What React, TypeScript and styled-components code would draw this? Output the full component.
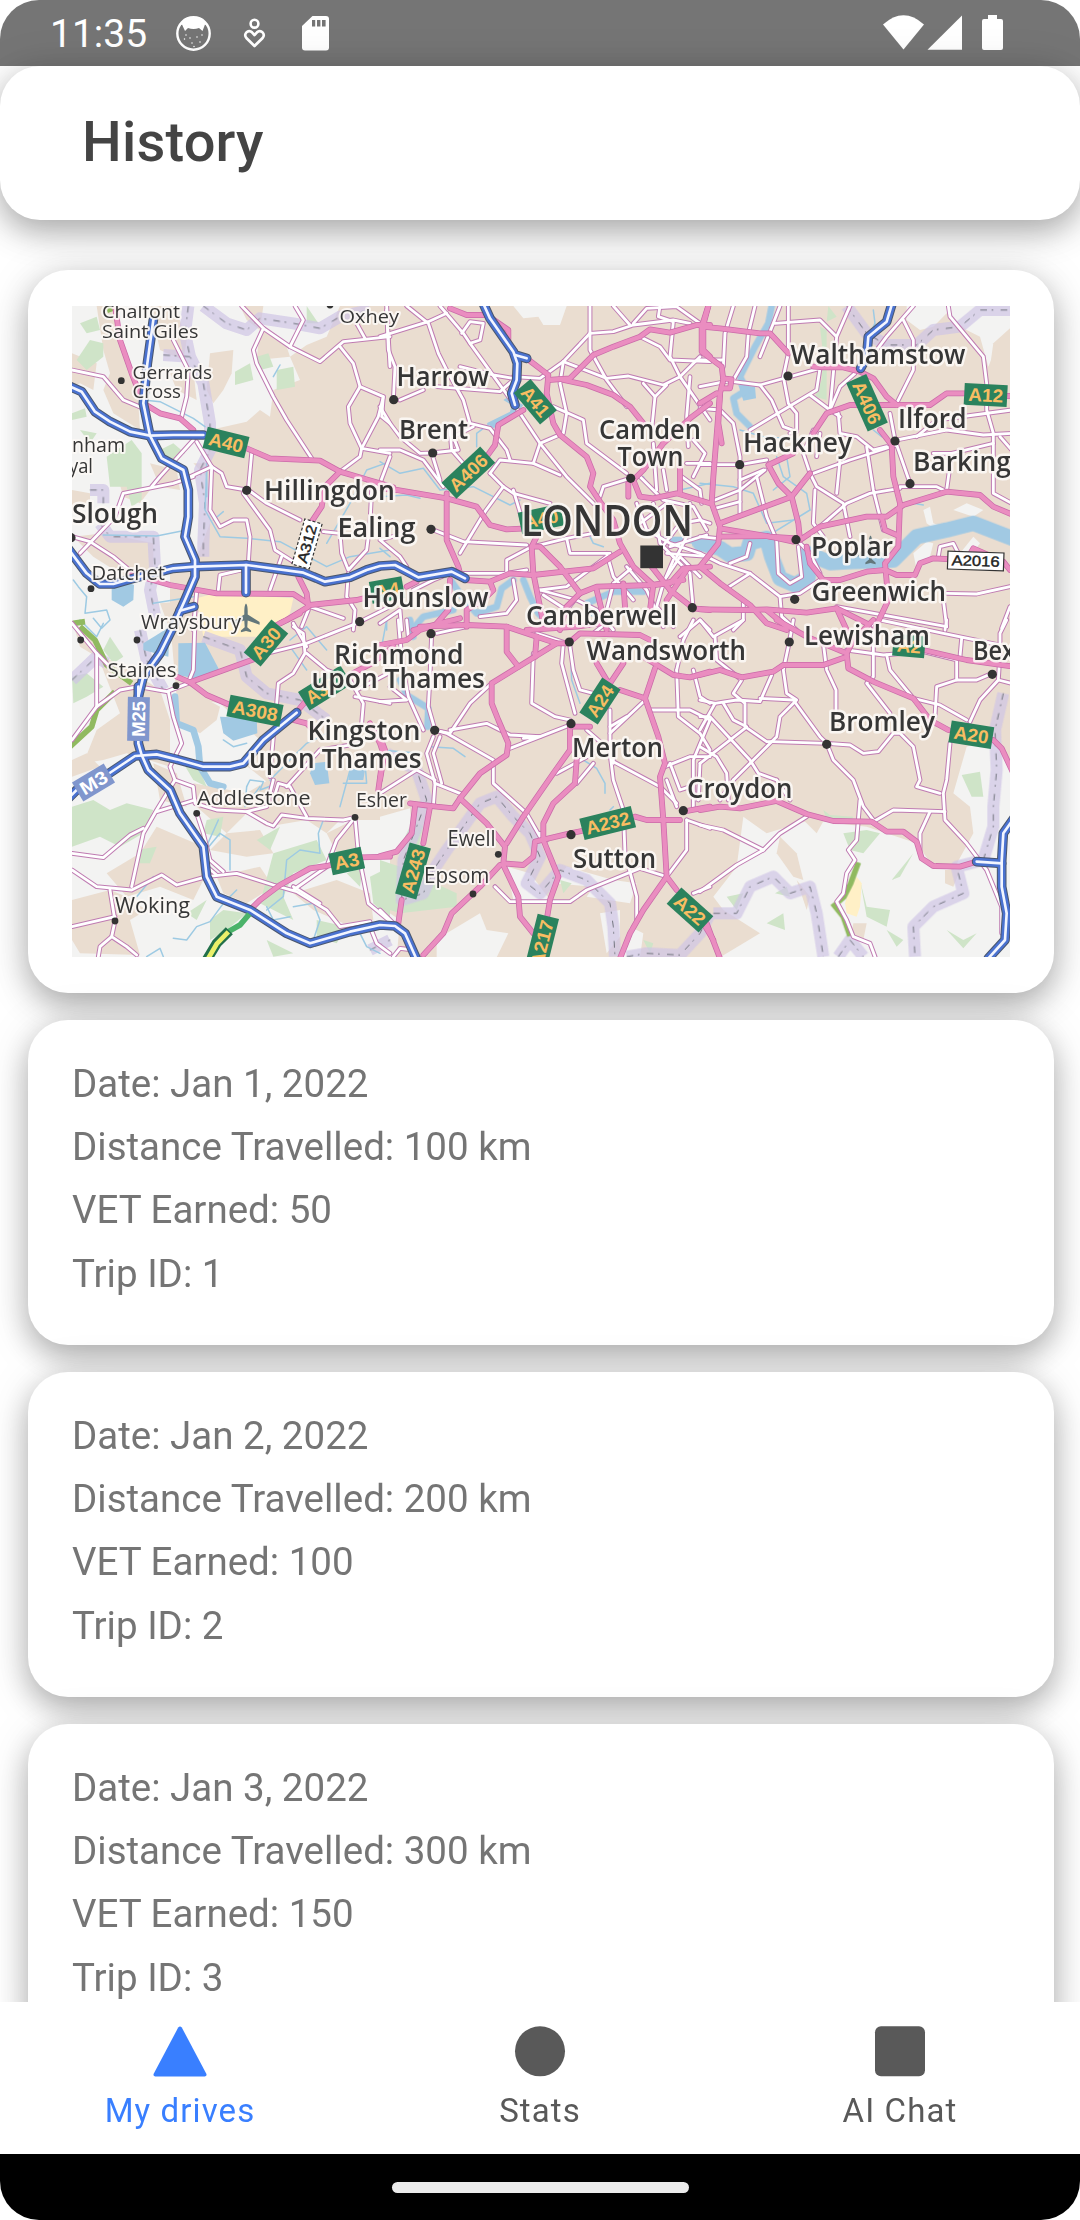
import React from "react";
import styled, { createGlobalStyle } from "styled-components";

const GlobalStyle = createGlobalStyle`
  html, body { margin: 0; padding: 0; background: #fff; }
  * { box-sizing: border-box; }
`;

const Screen = styled.div`
  width: 1080px;
  height: 2220px;
  display: flex;
  flex-direction: column;
  overflow: hidden;
  border-radius: 39px;
  background: #fff;
  font-family: Roboto, "Noto Sans", sans-serif;
`;

const StatusBar = styled.div`
  height: 66px;
  flex: none;
  display: flex;
  justify-content: space-between;
  background: #757575;
  color: #fff;
  padding: 0 76px 0 50px;
`;

const StatusGroup = styled.div<{ $gap?: number }>`
  display: flex;
  align-items: center;
  gap: ${(p) => p.$gap ?? 0}px;
`;

const Clock = styled.span`
  font-size: 39px;
  line-height: 68px;
  width: 125px;
  white-space: nowrap;
  padding-top: 2px;
`;

const Header = styled.header`
  height: 154px;
  flex: none;
  position: relative;
  z-index: 1;
  display: flex;
  align-items: center;
  padding: 0 82px 2px;
  background: #fff;
  border-radius: 40px;
  box-shadow: 0 12px 30px rgba(0, 0, 0, 0.26), 0 6px 48px rgba(0, 0, 0, 0.13);
`;

const Title = styled.h1`
  margin: 0;
  font-size: 56px;
  line-height: 66px;
  font-weight: 500;
  letter-spacing: 0.2px;
  color: #444;
`;

const Feed = styled.main`
  flex: 1;
  min-height: 0;
  overflow: hidden;
  display: flex;
  flex-direction: column;
  gap: 27px;
  padding: 50px 26px 0 28px;
`;

const Card = styled.section`
  flex: none;
  background: #fff;
  border-radius: 40px;
  box-shadow: 0 12px 30px rgba(0, 0, 0, 0.26), 0 6px 48px rgba(0, 0, 0, 0.13);
`;

const MapCard = styled(Card)`
  height: 723px;
  padding: 36px 44px;
`;

const TripCard = styled(Card)`
  height: 325px;
  padding: 32px 44px;
`;

const TripLine = styled.p`
  margin: 0;
  font-size: 38.5px;
  line-height: 63.2px;
  color: #757575;
`;

const TabBar = styled.nav`
  height: 152px;
  flex: none;
  position: relative;
  z-index: 1;
  display: grid;
  grid-template-columns: repeat(3, 1fr);
  background: #fff;
`;

const Tab = styled.div<{ $active?: boolean }>`
  display: flex;
  flex-direction: column;
  align-items: center;
  padding-top: 22px;
  gap: 9px;
  font-size: 33px;
  line-height: 44px;
  letter-spacing: 1.1px;
  color: ${(p) => (p.$active ? "#397fff" : "#595959")};
`;

const GestureBar = styled.footer`
  height: 66px;
  flex: none;
  display: flex;
  justify-content: center;
  align-items: center;
  background: #000;
`;

const Pill = styled.div`
  width: 297px;
  height: 11px;
  border-radius: 6px;
  background: #ebebeb;
`;

const MapSvg = styled.svg`
  display: block;
  width: 938px;
  height: 651px;
`;

/* ------------------------------------------------------------------ map */

type Layer =
  | "land" | "urban" | "wood" | "sand" | "water" | "river" | "creek" | "border"
  | "olive" | "minor" | "primary" | "motorway";
type Sheet = { x: number; y: number } & Partial<Record<Layer, string[]>>;

/* Six survey sheets, each drawn at three units to the pixel. */
const sheets: Sheet[] = [
  {
    x: 60, y: 290,
    land: [
      "36,48 840,48 800,140 740,165 690,200 720,270 640,300 630,380 600,360 560,395 450,420 440,520 400,520 440,560 450,700 400,830 330,850 330,1020 36,1020",
    ],
    urban: [
      "110,48 175,48 180,150 230,260 240,420 160,370 130,300 150,250 130,180",
      "270,48 345,48 380,150 370,210 300,180",
      "450,190 520,180 515,250 490,300 460,340 440,300",
      "36,190 110,220 100,300 60,280 36,290",
      "540,48 610,48 600,120 560,90",
      "600,115 680,170 690,200 590,210",
      "40,740 130,730 280,760 280,860 210,870 100,800",
      "270,520 350,540 360,600 300,590",
      "180,585 270,600 240,640 190,620",
      "330,250 400,240 410,330 350,300",
      "300,940 410,930 400,1020 330,1020",
      "36,600 90,610 90,640 36,650",
    ],
    wood: [
      "60,100 110,80 120,120 80,130", "90,150 130,160 130,200 80,240 50,210",
      "140,500 215,450 245,490 245,630 215,650 200,590 150,590",
      "590,200 625,190 640,230 600,240", "650,240 700,230 705,290 650,300",
      "525,245 570,220 580,270 525,285", "740,48 775,100 740,100",
      "36,370 75,355 80,380 36,390", "300,480 340,460 375,490 320,515", "60,420 110,430 90,460",
    ],
    sand: ["410,925 470,908 700,925 690,970 650,1010 620,1040 430,1040"],
    water: [
      "155,895 180,890 200,875 222,885 220,930 190,950 155,930",
    ],
    river: [],
    creek: [
      "40,870 55,890 80,920 75,970 140,960 150,990 125,1015 100,985",
      "250,330 300,335 400,385 435,410", "440,540 435,660 480,740 560,745 660,755 800,830 870,800 990,780",
      "640,260 660,225", "800,760 870,640 920,540 990,515", "130,735 290,738 380,720", "460,690 490,665",
      "280,940 400,920", "440,520 440,620",
    ],
    border: [
      "430,48 500,100 560,120 600,85 700,100 780,115 840,80 930,60",
      "385,48 375,130 390,200 430,280 450,400 450,480 420,540 435,640 430,760 430,800",
      "310,195 390,200", "120,700 150,740 280,740 285,830 270,900 290,1000", "90,600 130,600 130,640",
    ],
    olive: ["145,48 152,66", "40,1000 75,995"],
    minor: [
      "36,240 130,260 190,330 250,355", "340,150 360,190 385,240 380,320 365,380",
      "545,48 610,115 580,180 590,220 640,320 680,390 755,505",
      "610,115 690,170 780,215 850,155 990,140", "705,48 730,90 690,170", "890,100 915,145",
      "840,170 880,220 900,290 865,350 870,400 905,475 990,490",
      "900,290 970,320 955,380 905,475 900,500 840,545", "980,60 990,230", "970,320 965,380 990,400",
      "400,450 300,560 275,590", "410,455 455,530 485,550 500,590 560,600", "390,560 455,530",
      "400,560 340,580 190,610 165,680 60,790",
      "455,530 450,660 480,710 520,690 560,690 570,740 565,820",
      "575,490 565,600 620,640 720,690", "550,610 630,720 645,780 700,815", "665,800 630,900",
      "545,840 480,855 475,900", "36,740 90,755 160,800 220,850",
      "990,500 960,580 935,600 930,700 920,780 865,840 845,790 840,730 790,725",
      "865,850 860,920 885,960 880,1020", "750,950 850,985", "990,950 890,1000", "725,1010 745,960",
      "410,905 400,1020",
    ],
    primary: [
      "165,48 180,150 215,250 250,340 300,370 360,385 400,420",
      "560,475 630,505 780,512 840,545 960,580 1000,592",
      "840,545 795,590 785,650 755,695", "715,860 740,910 745,950 680,990 620,1020",
      "210,850 330,885 470,910 700,912 750,945 890,930 930,920",
    ],
    motorway: [
      "20,285 65,305 105,365 150,395 210,425 270,437 340,435 430,435",
      "280,90 262,220 250,340 270,437 305,505 370,540 385,600 385,680 375,740 405,810 405,860 375,930 350,985 335,1020 300,1090 250,1160 235,1220",
      "20,770 80,850 120,882 160,882 220,865 340,835 405,830 560,825 730,848 795,875 870,862 920,840 960,828 1005,825 1075,862 1175,845 1215,865",
      "558,825 558,908", "360,962 402,950",
    ],
  },
  {
    x: 380, y: 290,
    land: ["400,48 560,48 540,105 490,105 475,80 430,85"],
    water: ["320,400 390,365 395,345 370,330 385,320 430,345 400,385 340,415"],
    river: [
      "215,875 250,925 290,970 350,950 365,895 400,870", "430,870 450,920 475,970 520,1010",
      "850,750 920,750 1000,755", "640,970 620,940 700,905 790,905", "95,1020 130,980 220,960",
    ],
    creek: [
      "0,515 60,550 130,535 180,600 280,590 390,645 420,630", "290,470 290,430 330,400",
      "0,620 80,615 120,625", "0,775 30,800", "630,740 640,760 670,770", "900,600 990,580", "20,1020 20,980 60,970",
      "790,560 800,580",
    ],
    minor: [
      "80,48 145,100 175,190 200,240 250,330 270,400 330,415 380,480 390,510",
      "180,48 250,130 270,160 400,340 480,460 560,560 640,640",
      "0,140 145,95 200,70", "20,48 25,180 45,230 40,330", "270,160 300,150 310,100 270,95 245,130",
      "240,230 340,255 400,265", "170,290 360,305 400,270", "0,350 30,400 60,440 120,490 155,489 235,480 220,440 280,410",
      "60,330 130,300", "155,489 180,570", "0,480 60,480 130,510 190,590", "210,420 215,480 250,520",
      "630,48 630,180 680,270 740,350", "630,130 550,215 540,280 560,370 550,430 480,460 460,520 360,510 330,550",
      "630,130 700,125 760,105 880,90 930,100", "750,105 700,48", "840,48 835,80 880,95 870,200 900,260 990,390",
      "780,140 840,170 870,210 990,215", "760,100 800,55 890,50 960,100",
      "550,215 680,265 745,258 850,285 900,260 960,200", "520,350 610,390 620,460 740,550",
      "790,280 825,320 815,420", "860,285 825,320", "930,260 920,380 925,470", "400,260 480,265 550,215",
      "370,590 315,665 240,790", "370,590 400,610 510,640", "460,520 540,555", "330,550 370,590",
      "90,725 0,750 60,800 80,830", "155,718 250,755 440,765", "660,620 670,590 750,565",
      "455,770 380,810 380,850", "250,850 380,850 440,840", "460,770 560,745 570,790 690,790", "560,745 640,730",
      "820,640 840,760 880,800", "780,700 860,640 900,700 840,780", "860,600 850,540", "930,640 920,740 890,800",
      "900,700 960,690 990,700", "820,460 830,600", "905,560 960,600 965,640", "990,520 920,520",
      "780,560 850,630 940,650 980,720", "770,640 800,720 870,760 960,790", "940,560 975,490 940,450",
      "480,900 590,930 650,960 700,1020", "480,900 560,890 680,800", "760,830 700,880 680,960", "880,800 930,850 940,960",
      "880,810 850,880 830,950 880,1010", "400,870 410,930 380,970 300,980", "0,1000 60,960 65,1020",
      "490,915 560,960 600,910", "740,830 800,900 850,1010", "680,790 700,860 760,930", "860,790 990,800", "870,770 980,735",
      "860,860 900,800 960,860", "400,600 430,700", "100,900 160,870 210,850",
    ],
    primary: [
      "210,55 260,75 320,75 385,120 385,160",
      "440,205 505,255 500,310 520,400 540,435 620,500 640,550 630,590 660,635 700,690 720,760 760,830 820,885",
      "505,270 570,265 640,195 700,170 780,140 810,118 870,128 950,105 990,105",
      "985,48 970,105 970,180 990,200", "550,270 620,285 700,315 750,350 790,400",
      "430,360 355,405 345,465 320,500", "200,610 200,750 235,830 240,850",
      "990,340 930,385 850,460 790,540 760,570 780,620 820,625 890,610 990,640",
      "900,530 900,610", "745,580 745,620", "0,595 50,600 200,625 290,650 330,705 380,718 440,715",
      "470,740 455,770 460,850 490,1000", "455,770 480,770 540,830 600,910 650,890 820,885 910,870",
      "255,870 330,875 390,850 460,855 640,835 720,785", "80,890 110,875", "210,870 205,960 170,1000",
      "330,875 340,900 310,930 260,960 260,1010", "100,1020 240,985",
      "820,885 870,880 910,835 990,830", "820,885 810,960", "870,900 940,955 990,960", "860,930 920,840",
      "600,910 560,950 540,1020", "730,880 735,950", "650,900 680,1020", "440,1020 590,1010 660,1000", "815,830 870,900",
    ],
    motorway: [
      "305,30 330,85 400,185 412,220 410,270 395,310 405,345", "405,195 440,205",
    ],
  },
  {
    x: 700, y: 290,
    land: [
      "620,48 935,48 935,120 890,170 865,230 840,140 800,120 740,70 700,110 660,120 620,90",
      "680,700 670,660 690,650 700,700 740,715 720,730", "760,660 800,640 850,660 820,680",
      "640,790 680,755 700,760 690,800 650,840", "780,790 820,740 840,760 810,800",
    ],
    urban: ["880,160 935,110 935,230 870,230"],
    wood: ["360,110 380,120 380,330 345,320 365,270 370,200", "385,48 410,80 380,95"],
    water: ["115,285 165,290 168,325 130,332"],
    river: [
      "215,48 205,100 165,170 120,260 140,300 100,325 110,370 150,410",
    ],
    creek: [
      "230,500 250,560 320,610 330,660", "0,580 100,590 160,610 200,700 280,690", "260,500 270,560 220,600",
      "520,420 545,440", "520,60 525,100 505,140", "640,640 670,645", "200,740 330,660", "120,420 190,440 330,450",
    ],
    border: [
      "440,48 500,130 560,165 650,165 700,120 780,110 840,60 940,60",
    ],
    minor: [
      "100,48 75,130 70,230", "165,48 145,130 140,200 100,270 0,290", "240,48 220,100 180,200",
      "265,48 265,190 250,260 265,340 290,370 290,420 270,430", "225,100 360,90 410,140 390,360",
      "450,48 410,140", "100,275 180,285 360,235 350,300 150,420", "180,285 215,330 250,410 290,425",
      "330,315 390,360 420,380", "465,250 420,290 390,360", "610,90 640,150 640,240 590,340",
      "640,48 560,140 530,180", "745,48 750,80 850,200 860,280 860,360 880,430 880,610 935,640",
      "570,370 585,450 630,580", "590,450 740,420 850,435 935,430", "650,440 710,390 935,360", "935,480 900,440",
      "415,370 420,430 470,440 520,480 560,470", "340,550 450,510 590,465", "420,510 410,610",
      "500,470 520,600 550,720", "330,550 350,590 430,640 450,740", "345,600 340,700 370,740",
      "360,710 440,640 510,610 600,595", "600,590 710,590 730,600", "700,490 755,490 740,600", "755,490 880,460",
      "0,355 60,360 100,400 120,500 120,670", "0,524 120,524 200,510", "45,630 120,600 195,540",
      "45,655 120,635", "120,570 190,540", "170,560 200,680 230,750 235,850 270,880 305,860 295,770", "0,210 70,210",
      "340,420 310,490 330,550", "360,430 350,500", "0,790 60,820 150,850 240,920 300,910 360,870",
      "150,850 80,895", "150,760 140,800 90,820", "240,920 245,980 290,1020", "130,940 130,990 100,1020",
      "410,950 740,1010", "730,930 740,1010", "740,910 830,912 930,890", "715,800 720,770 760,760 775,790",
      "930,950 905,1015", "0,740 50,745", "300,760 330,790 360,850",
    ],
    primary: [
      "25,48 5,110 60,115 180,130 210,130 265,190", "5,110 5,185 65,230 70,270 60,310 55,400 65,460",
      "70,265 95,268 90,295 66,295", "60,310 40,560 35,640 60,710 55,760 0,830", "0,340 50,310",
      "340,230 370,232 430,232 480,245 520,265 560,320 590,345 690,345 740,310 800,310", "920,318 940,318",
      "590,345 450,345 380,370 340,430", "540,420 575,465 580,560 600,640 595,770 555,820 565,930 525,1015",
      "330,550 275,620 235,580 205,525 280,490 300,460", "275,620 60,700 60,715 210,740 290,745",
      "275,620 295,700 300,750 360,710 500,680 560,680 610,645 740,605 840,615 880,650 940,675",
      "545,680 555,720 590,735", "60,740 200,738 280,755",
      "320,770 330,820 370,870 420,870 500,845 555,840 590,855 645,855 660,820 700,805 800,810 820,775 910,815 930,840",
      "0,830 60,880 150,945 200,1000 260,1020", "0,958 150,960 200,958 320,968 410,955 500,1000", "410,955 440,1020",
      "200,960 260,1010",
    ],
    motorway: ["578,35 560,95 505,140 500,200 482,235"],
  },
  {
    x: 60, y: 620,
    land: [
      "36,0 330,0 350,230 480,250 600,360 550,430 640,500 620,590 850,600 990,600 990,1012 36,1012",
    ],
    urban: [
      "110,100 210,150 300,210 330,300 330,440 200,400 130,420 70,430 110,330 180,280",
      "36,0 100,60 110,110 60,80", "350,230 390,210 480,260 470,300 420,340 350,300",
      "400,490 560,520 640,470 780,480 850,590 800,640 740,600 620,620 560,580 500,640 410,560",
      "240,700 290,620 430,680 440,760 400,840 300,800 200,830 140,760",
      "36,840 150,810 200,830 260,870 210,900 240,1005 60,1000 36,960",
      "470,770 600,740 640,800 560,850 490,820", "700,820 830,780 930,820 940,900 850,910 760,870",
      "800,640 880,600 890,700 830,700", "280,430 350,460 380,560 300,540", "36,420 80,400 120,440 36,470",
      "500,640 600,630 640,700 560,710 450,690",
    ],
    wood: [
      "36,560 100,540 150,570 200,550 280,570 250,640 180,680 120,650 36,680",
      "36,170 80,160 130,200 80,230 40,250", "490,870 560,880 500,930 450,960 450,900",
      "640,700 770,660 800,720 700,760 670,830 700,900 640,870 600,850",
      "930,770 990,740 990,900 940,850", "370,430 420,450 440,500 400,480", "590,660 660,620 630,690",
      "440,600 490,590 480,650 430,640", "230,690 290,680 270,730 230,730", "380,880 440,840 410,900",
      "770,900 860,920 830,970 770,950", "620,960 700,1000 640,1010", "150,50 190,110 160,130 130,90", "860,760 910,740 900,800",
    ],
    water: [
      "355,70 435,68 478,150 400,175 355,165", "480,290 590,295 592,340 520,362 490,340",
      "250,70 330,20 325,110 250,90", "760,430 800,425 808,490 765,495 750,460", "870,445 915,450 910,480 865,480",
    ],
    river: ["345,230 350,310 400,330 415,380 420,440 450,490 490,500"],
    creek: [
      "60,0 110,50 130,10", "560,500 570,480 610,485 600,510 640,495 630,480 740,370 800,340", "490,360 520,380 560,370",
      "560,500 555,560 600,500", "690,60 740,20 800,90", "690,80 740,150", "870,450 840,560", "475,600 430,700 480,640 510,660 510,750",
      "620,870 670,830 680,720 720,690 780,700 775,640 790,600", "530,810 490,850 450,905 410,920 380,960 340,955",
      "280,770 230,830", "700,860 760,850 780,900 760,960", "620,860 640,900 690,890", "900,940 920,980 960,1000",
      "260,1010 300,985 310,1010", "850,490 920,490 915,430",
    ],
    border: [
      "36,180 110,110 140,130", "240,30 260,120 310,210", "430,50 540,90 560,170 620,220 720,240 800,300",
      "930,990 990,960",
    ],
    olive: ["60,20 105,60 140,135 215,190", "165,215 110,270 95,320 30,380"],
    minor: [
      "36,10 110,100 150,140", "110,100 110,260 36,360", "110,260 180,210 235,200 320,215 385,190",
      "405,0 400,150 385,187", "325,215 340,290 365,370 330,440 345,480 290,570 250,640 215,800",
      "345,480 400,500 405,550 470,570 560,575 620,610 640,618 665,585 740,595 850,600 885,592",
      "405,540 290,575", "410,580 430,640 450,720 490,755", "36,700 130,713 210,645 250,625",
      "36,750 110,800 215,810 305,765 350,795 440,770 530,760 640,795 710,815 800,870 840,920 930,905",
      "150,810 165,903 155,950 200,980 230,1005", "165,890 36,920", "155,950 120,980 115,1010",
      "885,592 830,660 800,740 700,810", "885,592 895,700 925,850 985,900", "560,575 620,560 640,480",
      "640,540 655,490 690,500 740,590", "680,500 780,390 900,370", "630,470 640,350",
      "650,250 655,190 700,160 735,100 730,40 700,20", "620,100 740,70 890,10", "740,100 800,150 850,170",
      "870,180 910,250 905,310", "890,210 985,160", "885,230 990,250", "930,920 950,970 990,1000",
      "470,765 440,740", "740,80 700,10", "780,850 700,800",
    ],
    primary: [
      "720,-20 660,10", "590,115 390,187 350,170", "390,187 440,225 510,255", "715,270 740,240",
      "700,300 740,310 760,330", "860,170 935,130 1000,80", "930,310 960,370 970,400 955,510",
      "990,710 900,712 800,738 750,745 660,795 600,840 575,865",
    ],
    motorway: [
      "15,545 60,500 140,465 225,408 290,403 350,418 430,440 510,440 550,430 610,360 710,278",
      "235,200 235,370 245,405 265,450 330,510 360,580 430,680 440,770 470,830 570,870 680,940 750,970 870,935 960,915 1005,918 1035,940 1075,1030",
    ],
  },
  {
    x: 380, y: 620,
    land: [
      "0,590 90,565 95,640 50,700 0,710", "380,740 450,760 510,840 400,840",
      "200,940 300,880 320,930 385,940 350,1012 170,1012 170,970",
      "520,790 560,740 700,780 770,790 750,850 620,830 640,800", "750,920 790,940 780,1012 850,1012 720,1012",
      "0,860 60,900 50,1012 0,1012", "660,880 720,870 720,950 680,1000",
    ],
    wood: [
      "0,720 60,740 100,760 230,820 230,860 60,880 0,860", "540,780 575,790 550,820",
      "790,960 820,970 810,1000", "60,680 100,600 130,620 110,700",
    ],
    river: ["60,180 80,225 145,265 142,320", "90,0 100,50"],
    creek: ["20,0 5,80", "570,60 575,180 600,250", "150,380 220,385 255,410", "610,420 650,445 675,490 675,520", "0,390 120,400", "690,570 700,560"],
    border: [
      "20,400 110,450 140,540 110,620 70,720 65,840 130,820 160,750 200,690 300,550 350,530 400,590 450,640 480,710 440,790 480,820 540,750 620,780 690,850 700,920 705,1010",
      "740,1010 800,1000 900,1005 960,940 990,880",
    ],
    minor: [
      "55,0 60,60 70,150 85,230 130,330", "80,0 85,50",
      "155,40 150,170 145,260 165,330 200,340 340,420 340,490 440,580 480,650",
      "160,350 140,400 165,490 240,520", "165,490 160,560", "180,350 160,400 185,490",
      "165,331 210,340 270,250 335,190", "210,330 320,310 390,345 480,350 570,315", "390,385 480,350 430,355",
      "0,245 80,240 30,200", "170,40 260,20", "460,100 455,250 525,290 570,300", "550,70 545,130 585,280",
      "568,66 580,150 600,210 640,220", "690,270 690,400 700,480 730,570 735,700 770,830 770,900",
      "690,340 790,245", "810,270 930,270 990,300", "700,425 840,500 890,550", "530,460 640,400", "640,430 590,490",
      "890,150 895,290 960,340 990,390", "940,0 910,60 890,150", "940,150 960,230 990,250",
      "990,300 940,420 940,560", "855,440 930,410 990,410", "860,480 890,560", "920,600 920,690 860,770",
      "920,600 990,625", "860,770 780,745 620,810 570,845 390,845 345,800", "0,520 110,450 165,480",
      "940,820 990,800", "620,330 700,400 700,430", "870,430 900,510 930,500", "900,50 960,0 990,30", "690,320 740,290",
      "0,870 40,910", "40,1010 60,985 100,990", "960,430 955,540", "480,640 500,660", "640,40 690,0", "470,40 560,70",
    ],
    primary: [
      "0,75 80,60 120,30 200,5", "120,20 260,15 380,20 470,50 530,70 565,70 600,40 780,45 810,60",
      "380,20 380,95 415,140", "530,70 335,190 335,250 355,300 385,370 380,405 300,460 240,535 220,565 170,560 90,550",
      "150,560 130,670", "105,560 95,640 50,695 0,708", "470,50 465,110",
      "240,535 320,610 375,680 370,730 430,735 460,710 465,665 570,640 620,630",
      "570,320 570,390 520,460 430,590 380,670", "630,320 570,320", "590,420 585,490 520,550 490,610 490,660 535,770 510,840 500,900",
      "765,590 800,600 900,600", "370,735 415,830 420,890 460,940", "360,735 300,800 215,880 190,940 130,1005",
      "65,840 55,910", "650,130 680,180 690,190 730,130",
      "720,210 795,235 835,350 855,430 840,470 850,600 860,770 790,870 750,940 720,1015",
      "795,235 825,145", "790,110 880,165 930,172 990,155", "860,770 890,810", "970,910 1000,960",
      "910,575 990,560", "0,350 15,390 0,480",
    ],
  },
  {
    x: 700, y: 620,
    land: [
      "130,590 200,640 330,600 500,620 650,670 700,740 760,750 820,640 810,560 760,520 800,380 880,350 935,450 935,1012 60,1012 180,940 70,870 40,830 110,740",
    ],
    urban: ["240,650 290,700 310,780 280,770 230,700", "310,600 375,595 350,640", "735,750 780,750 760,800 735,790", "290,780 330,830 320,870", "460,910 500,910 490,960 455,940"],
    wood: [
      "370,570 390,585 460,590 450,605 380,600", "430,640 500,630 540,640 490,700 450,690", "785,465 840,455 850,530 815,530",
      "480,780 500,860 570,870 560,920 500,890", "575,780 640,700 600,770", "200,910 250,880 255,930",
      "740,930 790,960 830,940 790,985", "80,830 130,820 110,870", "560,930 610,960 590,980", "225,820 260,800 270,830",
    ],
    sand: ["470,770 485,790 480,860 470,890 440,880 435,850 450,800"],
    border: [
      "40,880 110,880 150,800 220,770 270,820 330,800 350,880 370,1010",
      "910,220 885,330 890,450 880,560 880,620 850,720 770,740 790,820 700,860 640,920 645,1010",
      "415,1010 450,960 490,1010",
    ],
    olive: ["475,727 452,790 432,830 415,845", "398,850 430,890 450,948"],
    minor: [
      "0,0 40,50 130,0", "45,50 50,120 125,180 100,220 135,250 135,320 200,365 220,365",
      "0,240 45,250 110,240 180,245 215,165", "180,235 280,240 360,350 380,370",
      "280,0 268,66 250,150 260,220 290,240 240,290 230,350 215,365 100,480", "0,430 135,325", "45,250 0,330",
      "0,290 30,290 150,420 175,460 230,480", "0,380 50,410 80,460 85,540", "70,250 100,300 140,320",
      "215,365 380,370 450,375 490,400 535,395 580,340 600,340 640,380 660,480 650,500 720,520",
      "370,70 380,150 408,210 408,280", "380,370 400,420 460,480 490,560 520,600",
      "480,540 470,660 445,690 465,720 440,760 430,820 410,845 440,900 460,950 510,970 525,1010",
      "520,0 520,170 500,190 570,280", "440,90 550,105 670,95 770,120 770,180 710,200 705,290",
      "560,105 570,150 640,235 720,255 800,300", "540,0 730,40 900,75", "735,30 740,0", "785,55 780,110",
      "770,180 830,180 877,160", "900,100 895,180 840,240 810,305", "895,180 935,190", "920,0 900,40 900,80",
      "750,370 740,480 730,520 735,600 800,670 860,750 905,860 905,940", "520,605 580,570 735,575",
      "690,575 660,640 660,700", "0,815 110,735 190,690 240,640 320,590", "0,615 70,630 190,690",
      "230,480 270,540", "100,480 60,540",
    ],
    primary: [
      "0,165 60,150 125,172 220,155 250,135 370,135 440,110", "230,0 320,50 440,100 445,145 520,185 640,235 690,300 745,330",
      "440,100 460,60 520,0", "670,90 800,120 940,140", "880,360 905,385 940,460",
      "0,570 60,560 120,565 230,543 320,582 400,603 515,605 560,635 610,635 650,665 665,715 700,738 780,740 830,725",
      "20,910 35,950 60,1015",
    ],
    motorway: ["945,590 910,640 905,725 905,800 920,880 915,960 865,1015", "830,725 905,730"],
  },
];

type Pass = { layer: Layer; fill?: string; stroke?: string; width?: number; dash?: string; opacity?: number };

/* Painting order from the ground up. */
const passes: Pass[] = [
  { layer: "land", fill: "#f3f3f2" },
  { layer: "urban", fill: "#eaddd0" },
  { layer: "wood", fill: "#cfe4c8" },
  { layer: "sand", fill: "#fff0c6" },
  { layer: "border", stroke: "#cfc4e6", width: 36, opacity: 0.7 },
  { layer: "border", stroke: "#666a72", width: 3, dash: "20 14 5 22", opacity: 0.9 },
  { layer: "creek", stroke: "#9dcae3", width: 4.5 },
  { layer: "water", fill: "#a1c9e3" },
  { layer: "river", stroke: "#a1c9e3", width: 20 },
  { layer: "olive", stroke: "#90ba60", width: 17 },
  { layer: "minor", stroke: "#bf7bb2", width: 14.5 },
  { layer: "minor", stroke: "#ffffff", width: 8.5 },
  { layer: "primary", stroke: "#cb6ba9", width: 17.5 },
  { layer: "primary", stroke: "#ea8dc0", width: 13 },
  { layer: "motorway", stroke: "#4a566c", width: 29 },
  { layer: "motorway", stroke: "#4a72d0", width: 23 },
  { layer: "motorway", stroke: "#f2f5ff", width: 8 },
];

const THAMES = "0,760 60,775 90,795 140,790 150,758 200,745 215,800 240,865 285,885 325,860 322,790 390,818 440,815 580,810 650,740 740,720 820,700 950,750";

type Label = [text: string, x: number, y: number, width: number | null, size: number];

const labels: Label[] = [
  ["Chalfont", 102, 318, 78, 19], ["Saint Giles", 102, 338, 96.5, 19],
  ["Gerrards", 132.5, 378.5, 79.5, 19], ["Cross", 132.5, 397.5, 48.5, 19],
  ["nham", 72, 452, 53, 19.5], ["yal", 69, 473, 24, 19.5], ["Datchet", 91.5, 580, 73.5, 19.5],
  ["Wraysbury", 141, 629, 100, 19.5], ["Oxhey", 339.5, 322.5, 59.5, 19], ["Staines", 107.5, 677, 69, 19.5],
  ["Addlestone", 197, 805, 113.5, 20], ["Esher", 356, 807, 51, 20], ["Ewell", 447.5, 845.7, 48, 21],
  ["Epsom", 424, 883, 65.5, 21], ["Woking", 115, 912.5, 75, 21],
  ["Slough", 72, 523, 86, 26.5], ["Hillingdon", 264, 499.5, 131, 26.5], ["Ealing", 337.5, 536.5, 78, 26.5],
  ["Hounslow", 362.5, 606.5, 126, 26.5], ["Harrow", 396.5, 385.7, 92.5, 26.5], ["Brent", 399, 438.5, 69, 26.5],
  ["Camden", 599, 438.5, 102, 26.5], ["Town", 617.5, 465.7, 66, 26.5], ["Camberwell", 526, 625, 151, 26.5],
  ["Walthamstow", 790.5, 363.5, 175, 26.5], ["Ilford", 898, 427.7, 68.5, 26.5], ["Hackney", 743, 451.5, 109, 26.5],
  ["Barking", 913, 470.7, 98, 26.5], ["Poplar", 811, 555.7, 82, 26.5], ["Greenwich", 811.5, 600.7, 134.5, 26.5],
  ["Lewisham", 804, 645, 126, 26.5], ["Wandsworth", 586.5, 660, 159.5, 26.5], ["Bex", 973, 660, 42, 26.5],
  ["Bromley", 829, 731, 106, 26.5], ["Croydon", 687, 798, 105.5, 26.5], ["Merton", 572, 756.7, 91, 26.5],
  ["Sutton", 573, 867.7, 83, 26.5], ["Richmond", 334, 663.5, 129.5, 26.5], ["upon Thames", 311.5, 688, 173.5, 26.5],
  ["Kingston", 307.5, 740, 113, 26.5], ["upon Thames", 249, 768, 172.5, 26.5],
];

type ShieldKind = "green" | "white" | "blue";
type Shield = [text: string, x: number, y: number, angle: number, width: number, kind?: ShieldKind];

const shields: Shield[] = [
  ["A40", 226, 442.5, 14, 43], ["A41", 535.3, 401.7, 50, 41], ["A406", 468.3, 472.7, -43, 53],
  ["A312", 307, 544, -74, 47, "white"], ["A406", 867, 402.7, 66, 53], ["A12", 985.7, 395, 3, 43],
  ["A2016", 975.7, 561, 2, 56, "white"], ["A30", 266, 643, -50, 43], ["A308", 255, 710.7, 11, 54],
  ["A307", 325, 688, -32, 50], ["A3", 346.7, 861, -12, 33], ["A4", 387, 590, -10, 33], ["A40", 541, 519, -12, 43],
  ["A24", 600, 701, -57, 42], ["A232", 607.7, 823, -14, 53], ["A243", 413, 871, -74, 53],
  ["A217", 541.7, 943, -76, 55], ["A22", 690, 910, 42, 43], ["A20", 971.3, 734.7, 9, 43], ["A2", 909, 646, 5, 32],
  ["M25", 138.5, 719, -89, 44, "blue"], ["M3", 93.5, 782.5, -31, 37, "blue"],
];

const shieldColors: Record<ShieldKind, { bg: string; fg: string }> = {
  green: { bg: "#2b825d", fg: "#f8bd62" },
  white: { bg: "#ffffff", fg: "#222222" },
  blue: { bg: "#8096cd", fg: "#ffffff" },
};

const bigDots = [
  [246.7, 490.3], [359.7, 621.7], [393.7, 399.7], [432.7, 453], [431, 529.3], [630.7, 478.3], [692.3, 607.7],
  [788, 376], [739.7, 464.7], [895, 441], [910, 483.7], [796, 539.7], [794.7, 599.3], [431, 633.7], [434.7, 730.3],
  [569.3, 642], [571, 723.7], [571, 834.7], [683.3, 810.7], [789.3, 642], [826.7, 744.3], [992.3, 674.3], [71, 537.7],
];
const smallDots = [
  [121.3, 380.7], [91, 588.7], [80.7, 640], [137, 640], [176, 685.7], [196.7, 813.3], [355, 817.3], [115, 921],
  [498.3, 854.3], [473, 894], [330, 305],
];

function PlacePlane({ x, y, scale }: { x: number; y: number; scale: number }) {
  return (
    <path
      transform={`translate(${x} ${y}) scale(${scale})`}
      fill="#63777b"
      d="M0,-16 Q2,-14 2,-7 L2,-3 L16,6 L16,9 L2,4 L1.5,12 L6,16 L6,18 L0,16.5 L-6,18 L-6,16 L-1.5,12 L-2,4 L-16,9 L-16,6 L-2,-3 L-2,-7 Q-2,-14 0,-16 Z"
    />
  );
}

function LondonMap() {
  return (
    <MapSvg viewBox="72 306 938 651" role="img" aria-label="London">
      <rect x="72" y="306" width="938" height="651" fill="#eaddd0" />
      {passes.map((pass, i) => (
        <g
          key={i}
          fill={pass.fill ?? "none"}
          stroke={pass.stroke}
          strokeWidth={pass.width}
          strokeDasharray={pass.dash}
          opacity={pass.opacity}
          strokeLinejoin="round"
          strokeLinecap={pass.layer === "border" || pass.layer === "olive" ? "butt" : "round"}
        >
          {sheets.map((sheet) => (
            <g key={`${sheet.x}-${sheet.y}`} transform={`translate(${sheet.x} ${sheet.y}) scale(0.33333)`}>
              {(sheet[pass.layer] ?? []).map((points, n) =>
                pass.fill ? <polygon key={n} points={points} /> : <polyline key={n} points={points} />
              )}
              {pass.layer === "river" && sheet.x === 700 && sheet.y === 290 && (
                <polyline points={THAMES} strokeWidth={46} />
              )}
            </g>
          ))}
        </g>
      ))}
      <g transform="translate(60 620) scale(0.33333)" fill="none">
        <polyline points="568,882 540,915 505,935" stroke="#4bb36a" strokeWidth="17" />
        <polyline points="508,932 470,970 440,1020" stroke="#22704a" strokeWidth="30" />
        <polyline points="505,936 470,972 442,1020" stroke="#eaf06a" strokeWidth="14" />
      </g>
      <PlacePlane x={246} y={617} scale={0.85} />
      <PlacePlane x={870.5} y={549} scale={0.85} />
      {bigDots.map(([x, y]) => <circle key={`${x}-${y}`} cx={x} cy={y} r="4.6" fill="#333" />)}
      {smallDots.map(([x, y]) => <circle key={`${x}-${y}`} cx={x} cy={y} r="3.4" fill="#333" />)}
      {shields.map(([text, x, y, angle, width, kind = "green"]) => (
        <g key={`${text}-${x}`} transform={`translate(${x} ${y}) rotate(${angle})`}>
          <rect
            x={-width / 2} y={kind === "white" ? -9 : -11} width={width} height={kind === "white" ? 18 : 22}
            fill={shieldColors[kind].bg}
            stroke={kind === "white" ? "#333" : "none"} strokeWidth="1.2"
            strokeDasharray={text === "A312" ? "3 2" : undefined}
          />
          <text
            textAnchor="middle" y={kind === "white" ? 5 : 6.6} textLength={width - 8} lengthAdjust="spacingAndGlyphs"
            fontFamily="'Liberation Sans', Arial, sans-serif" fontSize={kind === "white" ? 14.5 : 18.5}
            fontWeight={kind === "white" ? 400 : 700} fill={shieldColors[kind].fg}
            stroke={kind === "white" ? "#222" : "none"} strokeWidth="0.4"
          >
            {text}
          </text>
        </g>
      ))}
      <rect x="640.3" y="545.5" width="22.7" height="22.7" fill="#333" />
      <g
        fontFamily="'Open Sans', 'Noto Sans', sans-serif" fill="#363636" stroke="#fcf8f5" strokeOpacity="0.9"
        strokeLinejoin="round" paintOrder="stroke"
      >
        {labels.map(([text, x, y, width, size]) => (
          <text
            key={`${text}-${x}-${y}`} x={x} y={y} fontSize={size} fontWeight={size > 22 ? 600 : 400}
            strokeWidth={size > 22 ? 5 : 4} textLength={width ?? undefined} lengthAdjust="spacingAndGlyphs"
          >
            {text}
          </text>
        ))}
        <text x="521" y="536" fontSize="44" fontWeight="600" strokeWidth="5" textLength="172" lengthAdjust="spacingAndGlyphs">
          LONDON
        </text>
      </g>
    </MapSvg>
  );
}

/* ---------------------------------------------------------------- icons */

const StatusGlyphs = styled.svg`
  display: block;
  flex: none;
`;

function NotificationIcons() {
  return (
    <StatusGlyphs width="160" height="66" viewBox="175 0 160 66">
      <circle cx="193.5" cy="33.5" r="16.2" fill="none" stroke="#fff" strokeWidth="2.4" />
      <path fill="#fff" d="M179,26 Q183,17 193.5,17 Q204,17 208,26 L205,24.5 L202.5,31 L199,28 Q193.5,30 188,28 L185,31 L182,24.5 Z" />
      <g fill="#fff">
        {[[186, 35], [190, 38], [197, 37], [202, 35], [184.5, 39], [192, 43], [200, 42], [194, 46.5]].map(
          ([x, y]) => <circle key={`${x}-${y}`} cx={x} cy={y} r="0.75" />
        )}
      </g>
      <circle cx="254.5" cy="23.7" r="3.9" fill="none" stroke="#fff" strokeWidth="2.6" />
      <path
        fill="none" stroke="#fff" strokeWidth="2.7" strokeLinejoin="round"
        d="M254.5,46 L246.6,38.2 C242.5,34 248.5,28.8 252,32.3 L254.5,35 L257,32.3 C260.5,28.8 266.5,34 262.4,38.2 Z"
      />
      <path fill="#fff" d="M312.5,16 H326 a3,3 0 0 1 3,3 V47.5 a3,3 0 0 1 -3,3 H305 a3,3 0 0 1 -3,-3 V26 Z" />
      <path fill="#757575" d="M312,20 h3.2 v6.6 h-3.2z M317,20 h3.4 v6.6 h-3.4z M322,20 h3.6 v6.6 h-3.6z" />
    </StatusGlyphs>
  );
}

function SystemIcons() {
  return (
    <StatusGlyphs width="122" height="66" viewBox="882 0 122 66">
      <path fill="#fff" d="M883,24.5 Q903.5,6 924,24.5 L903.5,49.5 Z" />
      <path fill="#fff" d="M962,15.5 V49.8 H927.5 Z" />
      <path fill="#fff" d="M988,15 h9 v4 h4 a2,2 0 0 1 2,2 v27 a2,2 0 0 1 -2,2 h-17 a2,2 0 0 1 -2,-2 v-27 a2,2 0 0 1 2,-2 h4z" />
    </StatusGlyphs>
  );
}

const TabIcon = ({ shape }: { shape: "triangle" | "circle" | "square" }) => (
  <svg width="56" height="56" viewBox="0 0 56 56" fill="currentColor">
    {shape === "triangle" && (
      <path d="M26.2,3.6 Q28,1.2 29.8,3.6 L54.3,49.8 Q55.2,52.2 52.8,52.4 H3.2 Q0.8,52.2 1.7,49.8 Z" />
    )}
    {shape === "circle" && <circle cx="28" cy="27.3" r="25" />}
    {shape === "square" && <rect x="3" y="2.3" width="50" height="50" rx="6" />}
  </svg>
);

const trips = [
  { id: 1, date: "Jan 1, 2022", distance: 100, earned: 50 },
  { id: 2, date: "Jan 2, 2022", distance: 200, earned: 100 },
  { id: 3, date: "Jan 3, 2022", distance: 300, earned: 150 },
];

export default function App() {
  return (
    <>
      <GlobalStyle />
      <Screen>
        <StatusBar>
          <StatusGroup>
            <Clock>11:35</Clock>
            <NotificationIcons />
          </StatusGroup>
          <StatusGroup>
            <SystemIcons />
          </StatusGroup>
        </StatusBar>
        <Header>
          <Title>History</Title>
        </Header>
        <Feed>
          <MapCard>
            <LondonMap />
          </MapCard>
          {trips.map((trip) => (
            <TripCard key={trip.id}>
              <TripLine>{`Date: ${trip.date}`}</TripLine>
              <TripLine>{`Distance Travelled: ${trip.distance} km`}</TripLine>
              <TripLine>{`VET Earned: ${trip.earned}`}</TripLine>
              <TripLine>{`Trip ID: ${trip.id}`}</TripLine>
            </TripCard>
          ))}
        </Feed>
        <TabBar>
          <Tab $active>
            <TabIcon shape="triangle" />
            My drives
          </Tab>
          <Tab>
            <TabIcon shape="circle" />
            Stats
          </Tab>
          <Tab>
            <TabIcon shape="square" />
            AI Chat
          </Tab>
        </TabBar>
        <GestureBar>
          <Pill />
        </GestureBar>
      </Screen>
    </>
  );
}
